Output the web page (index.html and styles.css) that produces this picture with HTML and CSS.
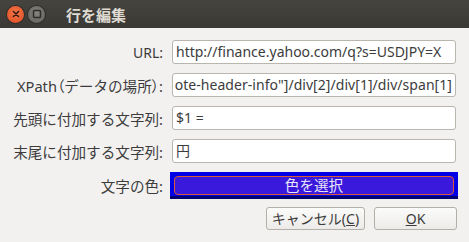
FILE: index.html
```html
<!DOCTYPE html>
<html lang="ja">
<head>
    <meta charset="UTF-8">
    <title>行を編集</title>
    <link rel="stylesheet" href="styles.css">
</head>
<body>
<div class="window">
    <div class="titlebar">
        <span class="win-btn close">
            <svg width="16" height="16" viewBox="0 0 16 16"><path d="M5.5 5.5 L10.5 10.5 M10.5 5.5 L5.5 10.5" stroke="#3a1a10" stroke-width="1.6" stroke-linecap="round"/></svg>
        </span>
        <span class="win-btn max">
            <svg width="16" height="16" viewBox="0 0 16 16"><rect x="4.5" y="4.5" width="7" height="7" rx="1" fill="none" stroke="#2e2d2a" stroke-width="1.5"/></svg>
        </span>
        <span class="title">行を編集</span>
    </div>

    <div class="content">
        <!-- 入力欄 -->
        <div class="form-grid">
            <label>URL:</label>
            <div class="field">http://finance.yahoo.com/q?s=USDJPY=X</div>

            <label class="ja">XPath<span class="paren">（</span>データの場所<span class="paren">）</span>:</label>
            <div class="field scrolled">ote-header-info"]/div[2]/div[1]/div/span[1]</div>

            <label class="ja">先頭に付加する文字列:</label>
            <div class="field">$1 =</div>

            <label class="ja">末尾に付加する文字列:</label>
            <div class="field">円</div>

            <label class="ja">文字の色:</label>
            <div class="color-btn"><div class="color-inner">色を選択</div></div>
        </div>

        <!-- ボタン -->
        <div class="actions">
            <button class="btn cancel">キャンセル(<u>C</u>)</button>
            <button class="btn ok"><u>O</u>K</button>
        </div>
    </div>
</div>
</body>
</html>
```

FILE: styles.css
```css
html, body {
    margin: 0;
    padding: 0;
    background-color: #f2f1f0;
    font-family: "Noto Sans", "Noto Sans CJK JP", sans-serif;
    font-size: 14px;
    color: #3c3c3c;
}

.window {
    width: 469px;
    height: 242px;
    overflow: hidden;
}

.titlebar {
    height: 28px;
    display: flex;
    align-items: center;
    background: linear-gradient(#45443f, #3a3935);
    padding-left: 7px;
    box-sizing: border-box;
}

.win-btn {
    width: 17px;
    height: 17px;
    border-radius: 50%;
    display: flex;
    align-items: center;
    justify-content: center;
    margin-right: 4px;
}

.win-btn svg {
    display: block;
}

.close {
    background: radial-gradient(circle at 50% 40%, #f4764a, #dd4a1e);
    box-shadow: 0 0 0 1px #2e2d2a;
}

.max {
    background: radial-gradient(circle at 50% 40%, #85847e, #5e5d58);
    box-shadow: 0 0 0 1px #2e2d2a;
}

.title {
    margin-left: 17px;
    color: #dfdbd2;
    font-weight: bold;
    font-size: 15px;
    font-family: "Noto Sans CJK JP", sans-serif;
}

.content {
    padding: 12px 13px 0 8px;
}

.form-grid {
    display: grid;
    grid-template-columns: 155px 1fr;
    column-gap: 9px;
    row-gap: 9px;
    align-items: center;
}

.form-grid label {
    text-align: right;
    white-space: nowrap;
}

.form-grid label.ja {
    font-size: 14.6px;
}

.paren {
    font-feature-settings: "palt";
}

.field {
    height: 24px;
    box-sizing: border-box;
    border: 1px solid #b9b6b0;
    border-radius: 3px;
    background-color: #fff;
    padding: 0 3px;
    line-height: 22px;
    color: #3c3c3c;
    white-space: nowrap;
    overflow: hidden;
}

.scrolled {
    text-align: right;
    letter-spacing: 0.05px;
    padding-left: 1px;
}

.color-btn {
    height: 27px;
    margin: 0 -2px;
    box-sizing: border-box;
    background-color: #0000e6;
    border-bottom: 3px solid #000070;
    padding: 4px 4px 1px 4px;
}

.color-inner {
    height: 19px;
    box-sizing: border-box;
    background-color: #3a18dc;
    border: 1px solid #d85a3a;
    border-radius: 4px;
    color: #e8e6f8;
    text-align: center;
    line-height: 17px;
    font-size: 14.6px;
}

.actions {
    display: flex;
    justify-content: flex-end;
    gap: 9px;
    margin-top: 8px;
    margin-right: -1px;
}

.btn {
    height: 23px;
    box-sizing: border-box;
    border: 1px solid #b3b0a9;
    border-radius: 3px;
    background: linear-gradient(#fbfbfa, #ecebe9);
    font-family: "Noto Sans", "Noto Sans CJK JP", sans-serif;
    font-size: 14px;
    color: #3c3c3c;
    padding: 0;
    line-height: 21px;
}

.cancel {
    width: 99px;
}

.ok {
    width: 83px;
}
```
